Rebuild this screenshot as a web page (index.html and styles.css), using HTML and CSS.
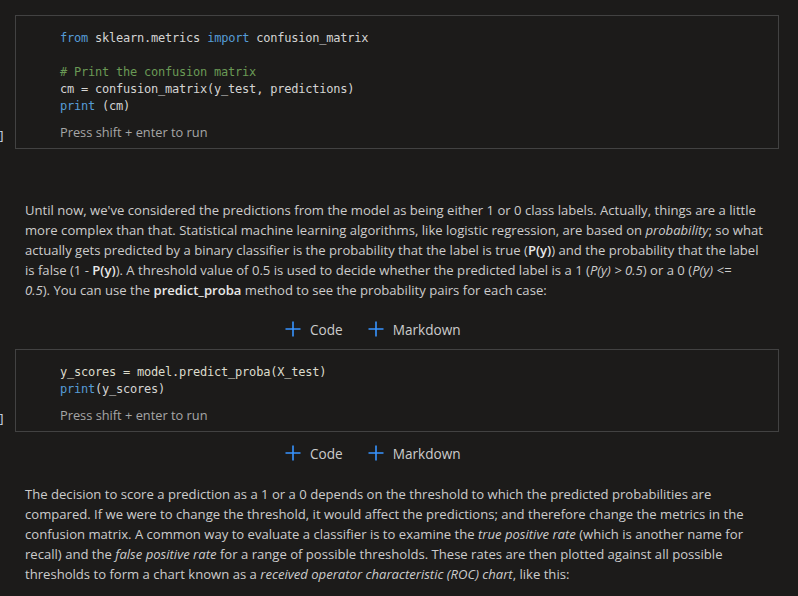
FILE: index.html
```html
<!DOCTYPE html>
<html>
<head>
<meta charset="utf-8">
<link rel="stylesheet" href="styles.css">
</head>
<body>
<div class="notebook">
  <div class="cell">
    <span class="exec">]</span>
    <pre class="code"><span class="kw">from</span> sklearn.metrics <span class="kw">import</span> confusion_matrix

<span class="cm"># Print the confusion matrix</span>
cm = confusion_matrix(y_test, predictions)
<span class="kw">print</span> (cm)</pre>
    <div class="hint">Press shift + enter to run</div>
  </div>

  <p class="md md-first">Until now, we've considered the predictions from the model as being either 1 or 0 class labels. Actually, things are a little<br>
more complex than that. Statistical machine learning algorithms, like logistic regression, are based on <em>probability</em>; so what<br>
actually gets predicted by a binary classifier is the probability that the label is true (<strong>P(y)</strong>) and the probability that the label<br>
is false (1 - <strong>P(y)</strong>). A threshold value of 0.5 is used to decide whether the predicted label is a 1 (<em>P(y) &gt; 0.5</em>) or a 0 (<em>P(y) &lt;=</em><br>
<em>0.5</em>). You can use the <strong>predict_proba</strong> method to see the probability pairs for each case:</p>

  <div class="toolbar">
    <span class="add"><svg class="plus" viewBox="0 0 16 16"><path d="M8 0.5v15M0.5 8h15"/></svg>Code</span>
    <span class="add"><svg class="plus" viewBox="0 0 16 16"><path d="M8 0.5v15M0.5 8h15"/></svg>Markdown</span>
  </div>

  <div class="cell cell-two">
    <span class="exec">]</span>
    <pre class="code"><span class="id">y_scores = model.predict_proba(X_test)</span>
<span class="kw">print</span>(y_scores)</pre>
    <div class="hint">Press shift + enter to run</div>
  </div>

  <div class="toolbar toolbar-two">
    <span class="add"><svg class="plus" viewBox="0 0 16 16"><path d="M8 0.5v15M0.5 8h15"/></svg>Code</span>
    <span class="add"><svg class="plus" viewBox="0 0 16 16"><path d="M8 0.5v15M0.5 8h15"/></svg>Markdown</span>
  </div>

  <p class="md md-second">The decision to score a prediction as a 1 or a 0 depends on the threshold to which the predicted probabilities are<br>
compared. If we were to change the threshold, it would affect the predictions; and therefore change the metrics in the<br>
confusion matrix. A common way to evaluate a classifier is to examine the <em>true positive rate</em> (which is another name for<br>
recall) and the <em>false positive rate</em> for a range of possible thresholds. These rates are then plotted against all possible<br>
thresholds to form a chart known as a <em>received operator characteristic (ROC) chart</em>, like this:</p>
</div>
</body>
</html>
```

FILE: styles.css
```css
html, body {
  margin: 0;
  padding: 0;
  background: #1c1b1a;
  overflow: hidden;
}

.notebook {
  padding-top: 15px;
  font-family: "Open Sans", "Noto Sans", sans-serif;
  color: #cccccc;
}

.cell {
  position: relative;
  margin-left: 15px;
  width: 764px;
  border: 1px solid #424242;
  padding: 14px 0 7px 44px;
  box-sizing: border-box;
}

.exec {
  position: absolute;
  left: -18px;
  bottom: 4px;
  font-family: "DejaVu Sans Mono", monospace;
  font-size: 12px;
  color: #c8d0e0;
}

.code {
  margin: 0;
  font-family: "DejaVu Sans Mono", monospace;
  font-size: 12px;
  letter-spacing: -0.22px;
  line-height: 17px;
  color: #d4d4d4;
}

.kw { color: #569cd6; }
.cm { color: #6a9955; }
.id { color: #dcdccc; }

.hint {
  margin-top: 9px;
  font-size: 12.8px;
  line-height: 17px;
  color: #a6a6a6;
}

.md {
  margin: 0 0 0 25px;
  white-space: nowrap;
  font-size: 13.1px;
  line-height: 20px;
  color: #cccccc;
}

.md strong { color: #e8e8e8; font-weight: 600; }
.md em { font-style: italic; }

.md-first { margin-top: 51px; }
.md-second { margin-top: 19px; }

.toolbar {
  display: flex;
  gap: 25px;
  padding-left: 285px;
  margin-top: 17px;
  margin-bottom: 8px;
  height: 24px;
  align-items: center;
  font-size: 13.6px;
  color: #cccccc;
}

.toolbar-two {
  margin-top: 9px;
  margin-bottom: 0;
}

.add {
  display: flex;
  align-items: center;
  gap: 9px;
}

.plus {
  width: 16px;
  height: 16px;
  fill: none;
  stroke: #3794ff;
  stroke-width: 1.6;
}
```
